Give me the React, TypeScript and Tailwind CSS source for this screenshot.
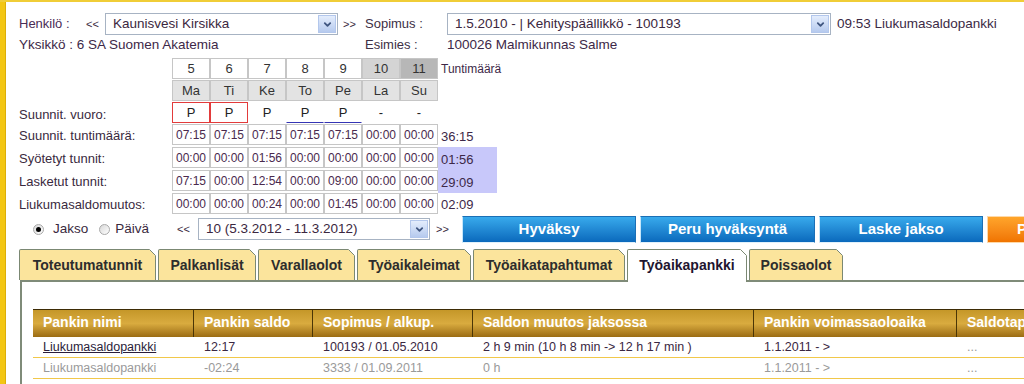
import React from 'react';

const FONT = "font-['Liberation_Sans',Arial,sans-serif]";

function Chevron() {
  return (
    <svg width="9" height="9" viewBox="0 0 10 10" fill="none">
      <path d="M2 3.5L5 6.5L8 3.5" stroke="#3f557f" strokeWidth="2" strokeLinecap="round" strokeLinejoin="round" />
    </svg>
  );
}

function Select({ width, text }: { width: string; text: string }) {
  return (
    <div className={`shrink-0 flex items-center h-[22px] border border-[#a7b3c3] bg-white ${width}`}>
      <span className="flex-1 pl-[7px] text-[13.5px] text-[#3b2740] whitespace-nowrap overflow-hidden">{text}</span>
      <span className="w-[18px] h-[18px] mr-px flex items-center justify-center border border-[#b3c7ec] bg-linear-to-b from-[#e4edfc] to-[#b6caee]">
        <Chevron />
      </span>
    </div>
  );
}

function Radio({ checked }: { checked?: boolean }) {
  return (
    <span className="w-[11px] h-[11px] rounded-full border border-[#a9a9a9] bg-linear-to-br from-[#d8d8d8] to-white flex items-center justify-center">
      {checked && <span className="w-[5px] h-[5px] rounded-full bg-black" />}
    </span>
  );
}

const NUMS = ['5', '6', '7', '8', '9', '10', '11'];
const DAYS = ['Ma', 'Ti', 'Ke', 'To', 'Pe', 'La', 'Su'];
const VUORO = ['P', 'P', 'P', 'P', 'P', '-', '-'];

const NUM_CLS = [
  'border border-[#c6c6c6] bg-white',
  'border border-[#c6c6c6] bg-white',
  'border border-[#c6c6c6] bg-white',
  'border border-[#c6c6c6] bg-white',
  'border border-[#c6c6c6] bg-white',
  'border border-[#c6c6c6] bg-[#d4d4d4]',
  'border border-[#c6c6c6] bg-[#b7b7b7]',
];

const VUORO_CLS = [
  'border border-[#e23b3b]',
  'border border-[#e23b3b]',
  'border border-white',
  'border border-white border-b-[#3434b4]',
  'border border-white border-b-[#3434b4]',
  'border border-white',
  'border border-white',
];

const VALUE_ROWS = [
  { label: 'Suunnit. tuntimäärä:', vals: ['07:15', '07:15', '07:15', '07:15', '07:15', '00:00', '00:00'], sum: '36:15', hl: false, h: 'h-[23px]' },
  { label: 'Syötetyt tunnit:', vals: ['00:00', '00:00', '01:56', '00:00', '00:00', '00:00', '00:00'], sum: '01:56', hl: true, h: 'h-[23px]' },
  { label: 'Lasketut tunnit:', vals: ['07:15', '00:00', '12:54', '00:00', '09:00', '00:00', '00:00'], sum: '29:09', hl: true, h: 'h-[23px]' },
  { label: 'Liukumasaldomuutos:', vals: ['00:00', '00:00', '00:24', '00:00', '01:45', '00:00', '00:00'], sum: '02:09', hl: false, h: 'h-[22px]' },
];

const TABS = [
  { label: 'Toteutumatunnit', w: 'w-[137px]' },
  { label: 'Palkanlisät', w: 'w-[98px]' },
  { label: 'Varallaolot', w: 'w-[97px]' },
  { label: 'Työaikaleimat', w: 'w-[114px]' },
  { label: 'Työaikatapahtumat', w: 'w-[152px]' },
  { label: 'Työaikapankki', w: 'w-[120px]', active: true },
  { label: 'Poissaolot', w: 'w-[94px]' },
];

const COLS = ['w-[161px]', 'w-[119px]', 'w-[160px]', 'w-[281px]', 'w-[203px]', 'w-[160px]'];
const HEADERS = ['Pankin nimi', 'Pankin saldo', 'Sopimus / alkup.', 'Saldon muutos jaksossa', 'Pankin voimassaoloaika', 'Saldotapahtumat'];
const BANK_ROWS = [
  { cells: ['Liukumasaldopankki', '12:17', '100193 / 01.05.2010', '2 h 9 min (10 h 8 min -> 12 h 17 min )', '1.1.2011 - >', '...'], dim: false },
  { cells: ['Liukumasaldopankki', '-02:24', '3333 / 01.09.2011', '0 h', '1.1.2011 - >', '...'], dim: true },
];

const BLUE_BTN =
  'shrink-0 h-[27px] flex items-center justify-center text-white font-bold text-[15px] bg-linear-to-b from-[#38aaec] to-[#0a69bc] border border-t-[#1b6fb5] border-r-[#1b6fb5] border-l-[#c6e6fa] border-b-[#e0f1fb]';

function Tab({ label, w, active }: { label: string; w: string; active?: boolean }) {
  return (
    <div
      className={`relative shrink-0 flex items-center justify-center border border-b-0 border-[#7b8873] rounded-tl-[2px] text-[14px] font-bold ${w} ${
        active ? 'h-[33px] -mb-[2px] bg-white z-10 text-[#1f1530] pb-[2px]' : 'h-[31px] bg-[#fbe49c] text-[#2d2d2d]'
      }`}
    >
      {label}
      <svg className="absolute -top-px -right-px" width="7" height="7" viewBox="0 0 7 7">
        <polygon points="0,0 7,0 7,7" fill="#ffffff" />
        <line x1="0.5" y1="0.5" x2="6.5" y2="6.5" stroke="#7b8873" strokeWidth="1" />
      </svg>
    </div>
  );
}

export default function App() {
  return (
    <div className={`w-[1024px] h-[384px] overflow-hidden bg-white flex border-t-2 border-[#f0cd37] text-[13px] text-[#3a2a3e] ${FONT}`}>
      <div className="w-[6px] shrink-0 bg-[#f3c613] border-r border-[#dcae08]" />
      <div className="flex-1 pl-[13px] flex flex-col min-w-0">
        {/* header: person + contract */}
        <div className="flex items-center h-[22px] mt-[11px] whitespace-nowrap">
          <span className="shrink-0 w-[67px] text-[#4a2c55]">Henkilö :</span>
          <span className="shrink-0 w-[19px] text-[11px]">&lt;&lt;</span>
          <Select width="w-[233px]" text="Kaunisvesi Kirsikka" />
          <span className="shrink-0 w-[27px] pl-[5px] text-[11px]">&gt;&gt;</span>
          <span className="shrink-0 w-[82px] text-[#3d2f45]">Sopimus :</span>
          <Select width="w-[384px]" text="1.5.2010 - | Kehityspäällikkö - 100193" />
          <span className="shrink-0 ml-[6px] text-[13.5px] text-[#3b2a45]">09:53 Liukumasaldopankki</span>
        </div>
        <div className="flex items-center h-[20px] whitespace-nowrap">
          <span className="shrink-0 w-[346px] text-[13.5px] text-[#3d2848]">Yksikkö : 6 SA Suomen Akatemia</span>
          <span className="shrink-0 w-[82px] text-[#3d2f45]">Esimies :</span>
          <span className="shrink-0 text-[13.5px] text-[#3d2848]">100026 Malmikunnas Salme</span>
        </div>

        {/* week grid */}
        <div className="flex flex-col mt-[3px]">
          <div className="flex h-[22px]">
            <div className="w-[153px] shrink-0" />
            <div className="flex">
              {NUMS.map((n, i) => (
                <div key={n} className={`w-[38px] h-[21px] flex items-center justify-center text-[13px] text-[#333] ${NUM_CLS[i]}`}>
                  {n}
                </div>
              ))}
            </div>
            <div className="pl-[3px] pt-[2px] text-[12px] text-[#3d2848]">Tuntimäärä</div>
          </div>
          <div className="flex h-[22px]">
            <div className="w-[153px] shrink-0" />
            <div className="flex">
              {DAYS.map((d) => (
                <div key={d} className="w-[38px] h-[21px] flex items-center justify-center text-[13px] text-[#333] border border-[#c6c6c6] bg-[#e3e3e3]">
                  {d}
                </div>
              ))}
            </div>
          </div>
          <div className="flex h-[22px]">
            <div className="w-[153px] shrink-0 pt-[5px] leading-[15px]">Suunnit. vuoro:</div>
            <div className="flex">
              {VUORO.map((v, i) => (
                <div key={i} className={`w-[38px] h-[21px] flex items-center justify-center text-[13px] text-[#222] bg-white ${VUORO_CLS[i]}`}>
                  {v}
                </div>
              ))}
            </div>
          </div>
          {VALUE_ROWS.map((r) => (
            <div key={r.label} className={`flex ${r.h}`}>
              <div className="w-[153px] shrink-0 pt-[4px] leading-[15px]">{r.label}</div>
              <div className="flex">
                {r.vals.map((v, i) => (
                  <div key={i} className="w-[38px] h-[21px] flex items-center justify-center text-[12px] text-[#4a2a4e] border border-[#c6c6c6] bg-white">
                    {v}
                  </div>
                ))}
              </div>
              <div className={`w-[59px] flex items-center pl-[3px] pt-[2px] text-[13px] text-[#3d2848] ${r.hl ? 'bg-[#c8c8fa]' : ''}`}>{r.sum}</div>
            </div>
          ))}
        </div>

        {/* period selection + actions */}
        <div className="flex items-center h-[28px] whitespace-nowrap">
          <span className="shrink-0 ml-[14px]"><Radio checked /></span>
          <span className="shrink-0 ml-[9px] text-[13.5px]">Jakso</span>
          <span className="shrink-0 ml-[11px]"><Radio /></span>
          <span className="shrink-0 ml-[5px] text-[13.5px]">Päivä</span>
          <span className="shrink-0 ml-[28px] w-[21px] text-[11px]">&lt;&lt;</span>
          <Select width="w-[232px]" text="10 (5.3.2012 - 11.3.2012)" />
          <span className="shrink-0 w-[32px] pl-[6px] text-[11px]">&gt;&gt;</span>
          <div className="flex gap-[4px] shrink-0">
            <button className={`w-[174px] ${BLUE_BTN}`}>Hyväksy</button>
            <button className={`w-[175px] ${BLUE_BTN}`}>Peru hyväksyntä</button>
            <button className={`w-[164px] ${BLUE_BTN}`}>Laske jakso</button>
            <button className="shrink-0 w-[174px] h-[27px] flex items-center justify-start pl-[29px] text-white font-bold text-[15px] bg-linear-to-b from-[#ffa52a] to-[#f07400] border border-[#ffd9a8]">
              Palauta
            </button>
          </div>
        </div>

        {/* tabs */}
        <div className="flex items-end gap-[2px] h-[31px] mt-[6px]">
          {TABS.map((t) => (
            <Tab key={t.label} {...t} />
          ))}
        </div>
        <div className="flex-1 ml-px border-t-2 border-l-2 border-[#7f8b79] pt-[27px] pl-[11px]">
          <div className="flex h-[28px] border-t border-[#3d2b05] bg-linear-to-b from-[#c59728] via-[#d9ab3f] to-[#9b6c12]">
            {HEADERS.map((h, i) => (
              <div key={h} className={`${COLS[i]} shrink-0 flex items-end pb-[4px] pl-[10px] text-white font-bold text-[14px] whitespace-nowrap border-r border-[#4a3506]`}>
                {h}
              </div>
            ))}
          </div>
          {BANK_ROWS.map((r, ri) => (
            <div key={ri} className="flex h-[21px] border-b border-[#f1c84a]">
              {r.cells.map((c, i) => (
                <div
                  key={i}
                  className={`${COLS[i]} shrink-0 flex items-center pl-[10px] text-[12.5px] whitespace-nowrap ${
                    r.dim || i === 5 ? 'text-[#9a9a9a]' : i === 0 ? 'text-[#2a1d3a] underline' : 'text-[#3a2742]'
                  }`}
                >
                  {c}
                </div>
              ))}
            </div>
          ))}
        </div>
      </div>
    </div>
  );
}
